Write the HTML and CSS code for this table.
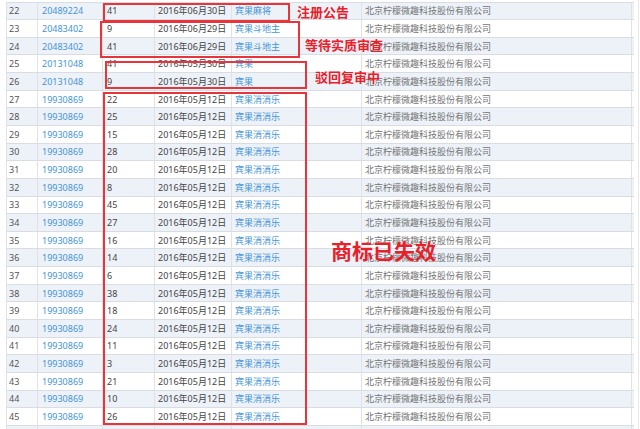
FILE: index.html
```html
<!DOCTYPE html>
<html lang="zh">
<head>
<meta charset="utf-8">
<link rel="stylesheet" href="styles.css">
</head>
<body>
<div class="page">
  <div class="grid">
    <div class="row even"><span class="c n">22</span><span class="c r"><a>20489224</a></span><span class="c k">41</span><span class="c d">2016年06月30日</span><span class="c m"><a>宾果麻将</a></span><span class="c o">北京柠檬微趣科技股份有限公司</span></div>
    <div class="row"><span class="c n">23</span><span class="c r"><a>20483402</a></span><span class="c k">9</span><span class="c d">2016年06月29日</span><span class="c m"><a>宾果斗地主</a></span><span class="c o">北京柠檬微趣科技股份有限公司</span></div>
    <div class="row even"><span class="c n">24</span><span class="c r"><a>20483402</a></span><span class="c k">41</span><span class="c d">2016年06月29日</span><span class="c m"><a>宾果斗地主</a></span><span class="c o">北京柠檬微趣科技股份有限公司</span></div>
    <div class="row"><span class="c n">25</span><span class="c r"><a>20131048</a></span><span class="c k">41</span><span class="c d">2016年05月30日</span><span class="c m"><a>宾果</a></span><span class="c o">北京柠檬微趣科技股份有限公司</span></div>
    <div class="row even"><span class="c n">26</span><span class="c r"><a>20131048</a></span><span class="c k">9</span><span class="c d">2016年05月30日</span><span class="c m"><a>宾果</a></span><span class="c o">北京柠檬微趣科技股份有限公司</span></div>
    <div class="row"><span class="c n">27</span><span class="c r"><a>19930869</a></span><span class="c k">22</span><span class="c d">2016年05月12日</span><span class="c m"><a>宾果消消乐</a></span><span class="c o">北京柠檬微趣科技股份有限公司</span></div>
    <div class="row even"><span class="c n">28</span><span class="c r"><a>19930869</a></span><span class="c k">25</span><span class="c d">2016年05月12日</span><span class="c m"><a>宾果消消乐</a></span><span class="c o">北京柠檬微趣科技股份有限公司</span></div>
    <div class="row"><span class="c n">29</span><span class="c r"><a>19930869</a></span><span class="c k">15</span><span class="c d">2016年05月12日</span><span class="c m"><a>宾果消消乐</a></span><span class="c o">北京柠檬微趣科技股份有限公司</span></div>
    <div class="row even"><span class="c n">30</span><span class="c r"><a>19930869</a></span><span class="c k">28</span><span class="c d">2016年05月12日</span><span class="c m"><a>宾果消消乐</a></span><span class="c o">北京柠檬微趣科技股份有限公司</span></div>
    <div class="row"><span class="c n">31</span><span class="c r"><a>19930869</a></span><span class="c k">20</span><span class="c d">2016年05月12日</span><span class="c m"><a>宾果消消乐</a></span><span class="c o">北京柠檬微趣科技股份有限公司</span></div>
    <div class="row even"><span class="c n">32</span><span class="c r"><a>19930869</a></span><span class="c k">8</span><span class="c d">2016年05月12日</span><span class="c m"><a>宾果消消乐</a></span><span class="c o">北京柠檬微趣科技股份有限公司</span></div>
    <div class="row"><span class="c n">33</span><span class="c r"><a>19930869</a></span><span class="c k">45</span><span class="c d">2016年05月12日</span><span class="c m"><a>宾果消消乐</a></span><span class="c o">北京柠檬微趣科技股份有限公司</span></div>
    <div class="row even"><span class="c n">34</span><span class="c r"><a>19930869</a></span><span class="c k">27</span><span class="c d">2016年05月12日</span><span class="c m"><a>宾果消消乐</a></span><span class="c o">北京柠檬微趣科技股份有限公司</span></div>
    <div class="row"><span class="c n">35</span><span class="c r"><a>19930869</a></span><span class="c k">16</span><span class="c d">2016年05月12日</span><span class="c m"><a>宾果消消乐</a></span><span class="c o">北京柠檬微趣科技股份有限公司</span></div>
    <div class="row even"><span class="c n">36</span><span class="c r"><a>19930869</a></span><span class="c k">14</span><span class="c d">2016年05月12日</span><span class="c m"><a>宾果消消乐</a></span><span class="c o">北京柠檬微趣科技股份有限公司</span></div>
    <div class="row"><span class="c n">37</span><span class="c r"><a>19930869</a></span><span class="c k">6</span><span class="c d">2016年05月12日</span><span class="c m"><a>宾果消消乐</a></span><span class="c o">北京柠檬微趣科技股份有限公司</span></div>
    <div class="row even"><span class="c n">38</span><span class="c r"><a>19930869</a></span><span class="c k">38</span><span class="c d">2016年05月12日</span><span class="c m"><a>宾果消消乐</a></span><span class="c o">北京柠檬微趣科技股份有限公司</span></div>
    <div class="row"><span class="c n">39</span><span class="c r"><a>19930869</a></span><span class="c k">18</span><span class="c d">2016年05月12日</span><span class="c m"><a>宾果消消乐</a></span><span class="c o">北京柠檬微趣科技股份有限公司</span></div>
    <div class="row even"><span class="c n">40</span><span class="c r"><a>19930869</a></span><span class="c k">24</span><span class="c d">2016年05月12日</span><span class="c m"><a>宾果消消乐</a></span><span class="c o">北京柠檬微趣科技股份有限公司</span></div>
    <div class="row"><span class="c n">41</span><span class="c r"><a>19930869</a></span><span class="c k">11</span><span class="c d">2016年05月12日</span><span class="c m"><a>宾果消消乐</a></span><span class="c o">北京柠檬微趣科技股份有限公司</span></div>
    <div class="row even"><span class="c n">42</span><span class="c r"><a>19930869</a></span><span class="c k">3</span><span class="c d">2016年05月12日</span><span class="c m"><a>宾果消消乐</a></span><span class="c o">北京柠檬微趣科技股份有限公司</span></div>
    <div class="row"><span class="c n">43</span><span class="c r"><a>19930869</a></span><span class="c k">21</span><span class="c d">2016年05月12日</span><span class="c m"><a>宾果消消乐</a></span><span class="c o">北京柠檬微趣科技股份有限公司</span></div>
    <div class="row even"><span class="c n">44</span><span class="c r"><a>19930869</a></span><span class="c k">10</span><span class="c d">2016年05月12日</span><span class="c m"><a>宾果消消乐</a></span><span class="c o">北京柠檬微趣科技股份有限公司</span></div>
    <div class="row"><span class="c n">45</span><span class="c r"><a>19930869</a></span><span class="c k">26</span><span class="c d">2016年05月12日</span><span class="c m"><a>宾果消消乐</a></span><span class="c o">北京柠檬微趣科技股份有限公司</span></div>
    <div class="row even"><span class="c n"></span><span class="c r"></span><span class="c k"></span><span class="c d"></span><span class="c m"></span><span class="c o"></span></div>
  </div>

  <div class="box box1"></div>
  <div class="box box2"></div>
  <div class="box box3"></div>
  <div class="box box4"></div>

  <div class="label l1">注册公告</div>
  <div class="label l2">等待实质审查</div>
  <div class="label l3">驳回复审中</div>
  <div class="label l4">商标已失效</div>
</div>
</body>
</html>
```

FILE: styles.css
```css
html, body {
  margin: 0;
  padding: 0;
  background: #ffffff;
}

.page {
  position: relative;
  width: 640px;
  height: 429px;
  overflow: hidden;
  font-family: "Noto Sans", "Noto Sans CJK SC", sans-serif;
  font-size: 9px;
}

.page::after {
  content: "";
  position: absolute;
  top: 0;
  bottom: 0;
  left: 638px;
  width: 1px;
  background: #e8e8e8;
}

.grid {
  margin-top: 1.5px;
  margin-left: 6px;
  width: 627px;
  border-left: 1px solid #dfe2e6;
  border-top: 1px solid #d9dde2;
}

.row {
  display: grid;
  grid-template-columns: 31px 65px 52px 77px 130px 270px;
  height: 17.65px;
  box-sizing: border-box;
  border-bottom: 1px solid #d9dde2;
  background: #ffffff;
}

.row.even {
  background: #edf2f9;
}

.c {
  display: flex;
  align-items: center;
  white-space: nowrap;
  overflow: hidden;
  border-right: 1px solid #e0e2e5;
  padding-left: 3px;
  color: #555555;
}

.n { padding-left: 2px; color: #555555; }
.r { padding-left: 4px; }
.k { padding-left: 4px; color: #444444; }
.d { color: #444444; }
.m { padding-left: 3px; }
.o { color: #737373; }

.c a {
  color: #4494d8;
  text-decoration: none;
}

.box {
  position: absolute;
  border: 2px solid #e8343b;
  box-sizing: border-box;
}

.box1 { left: 103px; top: 3px; width: 187px; height: 19px; }
.box2 { left: 100px; top: 21px; width: 200px; height: 37px; }
.box3 { left: 105px; top: 61px; width: 202px; height: 28px; }
.box4 { left: 103px; top: 92px; width: 204px; height: 333px; }

.label {
  position: absolute;
  color: #e8202a;
  font-family: "Noto Sans CJK SC", sans-serif;
  font-weight: 700;
  font-size: 13px;
  line-height: 16px;
  white-space: nowrap;
}

.l1 { left: 297px; top: 4px; }
.l2 { left: 305px; top: 37px; }
.l3 { left: 315px; top: 69px; }
.l4 { left: 331px; top: 238px; font-size: 21px; line-height: 24px; }
```
